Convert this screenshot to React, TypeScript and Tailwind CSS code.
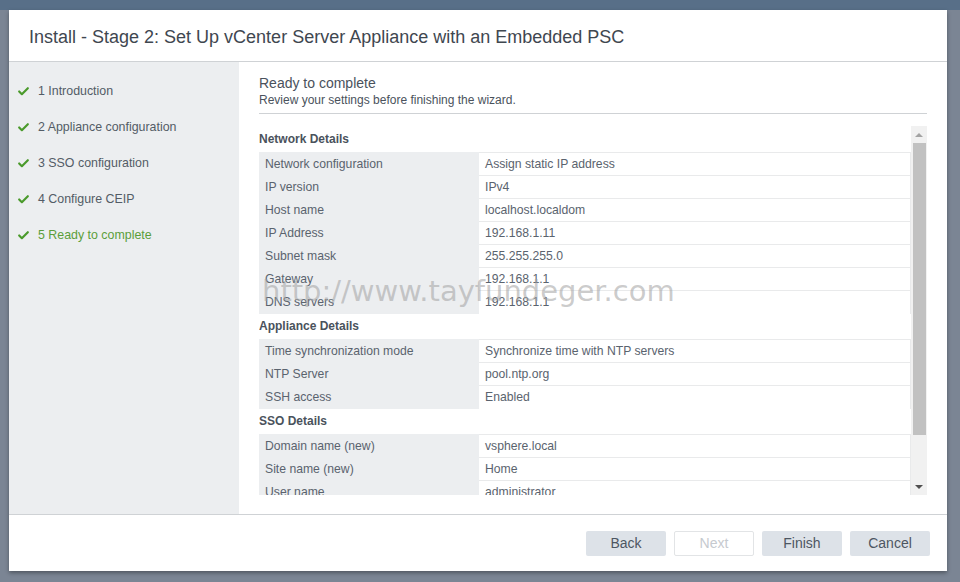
import { Check } from 'lucide-react';

const steps = [
  '1 Introduction',
  '2 Appliance configuration',
  '3 SSO configuration',
  '4 Configure CEIP',
  '5 Ready to complete',
];

const sections: { title: string; rows: [string, string][] }[] = [
  {
    title: 'Network Details',
    rows: [
      ['Network configuration', 'Assign static IP address'],
      ['IP version', 'IPv4'],
      ['Host name', 'localhost.localdom'],
      ['IP Address', '192.168.1.11'],
      ['Subnet mask', '255.255.255.0'],
      ['Gateway', '192.168.1.1'],
      ['DNS servers', '192.168.1.1'],
    ],
  },
  {
    title: 'Appliance Details',
    rows: [
      ['Time synchronization mode', 'Synchronize time with NTP servers'],
      ['NTP Server', 'pool.ntp.org'],
      ['SSH access', 'Enabled'],
    ],
  },
  {
    title: 'SSO Details',
    rows: [
      ['Domain name (new)', 'vsphere.local'],
      ['Site name (new)', 'Home'],
      ['User name', 'administrator'],
    ],
  },
];

function Button({ label, disabled }: { label: string; disabled?: boolean }) {
  return (
    <button
      className={
        disabled
          ? 'w-[80px] h-[25px] rounded-[2px] border border-[#e2e4e6] bg-white text-[14px] text-[#c6cacf]'
          : 'w-[80px] h-[25px] rounded-[2px] bg-[#dde2e8] text-[14px] text-[#4d5662]'
      }
    >
      {label}
    </button>
  );
}

export default function App() {
  return (
    <div className="w-[960px] h-[582px] bg-[#7b8594] flex flex-col overflow-hidden font-['Liberation_Sans',Arial,sans-serif]">
      <div className="h-[10px] bg-[#586f88] shrink-0" />
      <div className="flex pl-[9px]">
        <div className="relative w-[938px] h-[561px] bg-white flex flex-col shadow-[0_2px_4px_rgba(0,0,0,0.35)]">
          <div className="h-[52px] shrink-0 flex items-center px-[20px] pt-[3px] border-b border-[#cfd2d5]">
            <h1 className="text-[18px] text-[#3f4750]">
              Install - Stage 2: Set Up vCenter Server Appliance with an Embedded PSC
            </h1>
          </div>

          <div className="flex h-[452px] shrink-0">
            <div className="w-[230px] bg-[#eceef0] pt-[11px]">
              {steps.map((s, i) => (
                <div key={s} className="h-[36px] flex items-center pl-[8px] gap-[8px]">
                  <Check className="w-[13px] h-[13px] text-[#4a9a2b]" strokeWidth={4} />
                  <span className={i === 4 ? 'text-[12.4px] text-[#5b9e3a]' : 'text-[12.4px] text-[#535c66]'}>
                    {s}
                  </span>
                </div>
              ))}
            </div>

            <div className="flex-1 flex flex-col px-[20px] pt-[12px]">
              <div className="border-b border-[#cfd2d5] pb-[5px]">
                <div className="text-[14px] leading-[18px] text-[#4a525c]">Ready to complete</div>
                <div className="text-[12px] leading-[16px] text-[#4a525c]">
                  Review your settings before finishing the wizard.
                </div>
              </div>

              <div className="flex mt-[12px] h-[369px] overflow-hidden">
                <div className="flex-1">
                  {sections.map((sec, si) => (
                    <div key={sec.title}>
                      <div
                        className={
                          si === 0
                            ? 'h-[26px] flex items-center text-[12px] font-bold text-[#4a525c]'
                            : 'h-[26px] flex items-center text-[12px] font-bold text-[#4a525c]'
                        }
                      >
                        {sec.title}
                      </div>
                      {sec.rows.map(([k, v]) => (
                        <div key={k} className="flex h-[23px] text-[12.2px] text-[#5a636e]">
                          <div className="w-[220px] bg-[#eceef0] flex items-center px-[6px] border-t border-[#eceef0] -mb-px">
                            {k}
                          </div>
                          <div className="flex-1 flex items-center px-[6px] border-t border-r border-[#e9eaeb] -mb-px">
                            {v}
                          </div>
                        </div>
                      ))}
                    </div>
                  ))}
                </div>

                <div className="w-[16px] bg-[#f1f1f1] flex flex-col items-center">
                  <div className="h-[17px] flex items-center justify-center">
                    <div className="w-0 h-0 border-l-[4px] border-r-[4px] border-b-[4px] border-l-transparent border-r-transparent border-b-[#a3a3a3]" />
                  </div>
                  <div className="w-[13px] h-[292px] bg-[#c1c1c1]" />
                  <div className="flex-1" />
                  <div className="h-[17px] flex items-center justify-center">
                    <div className="w-0 h-0 border-l-[4px] border-r-[4px] border-t-[4px] border-l-transparent border-r-transparent border-t-[#505050]" />
                  </div>
                </div>
              </div>
            </div>
          </div>

          <div className="flex-1 border-t border-[#cfd2d5] flex items-center justify-end gap-[8px] pr-[17px]">
            <Button label="Back" />
            <Button label="Next" disabled />
            <Button label="Finish" />
            <Button label="Cancel" />
          </div>

          <div className="absolute left-[253px] top-[263px] text-[29px] leading-[36px] text-[#a0a0a0]/55 font-['DejaVu_Sans',sans-serif] pointer-events-none">
            http://www.tayfundeger.com
          </div>
        </div>
      </div>
    </div>
  );
}
